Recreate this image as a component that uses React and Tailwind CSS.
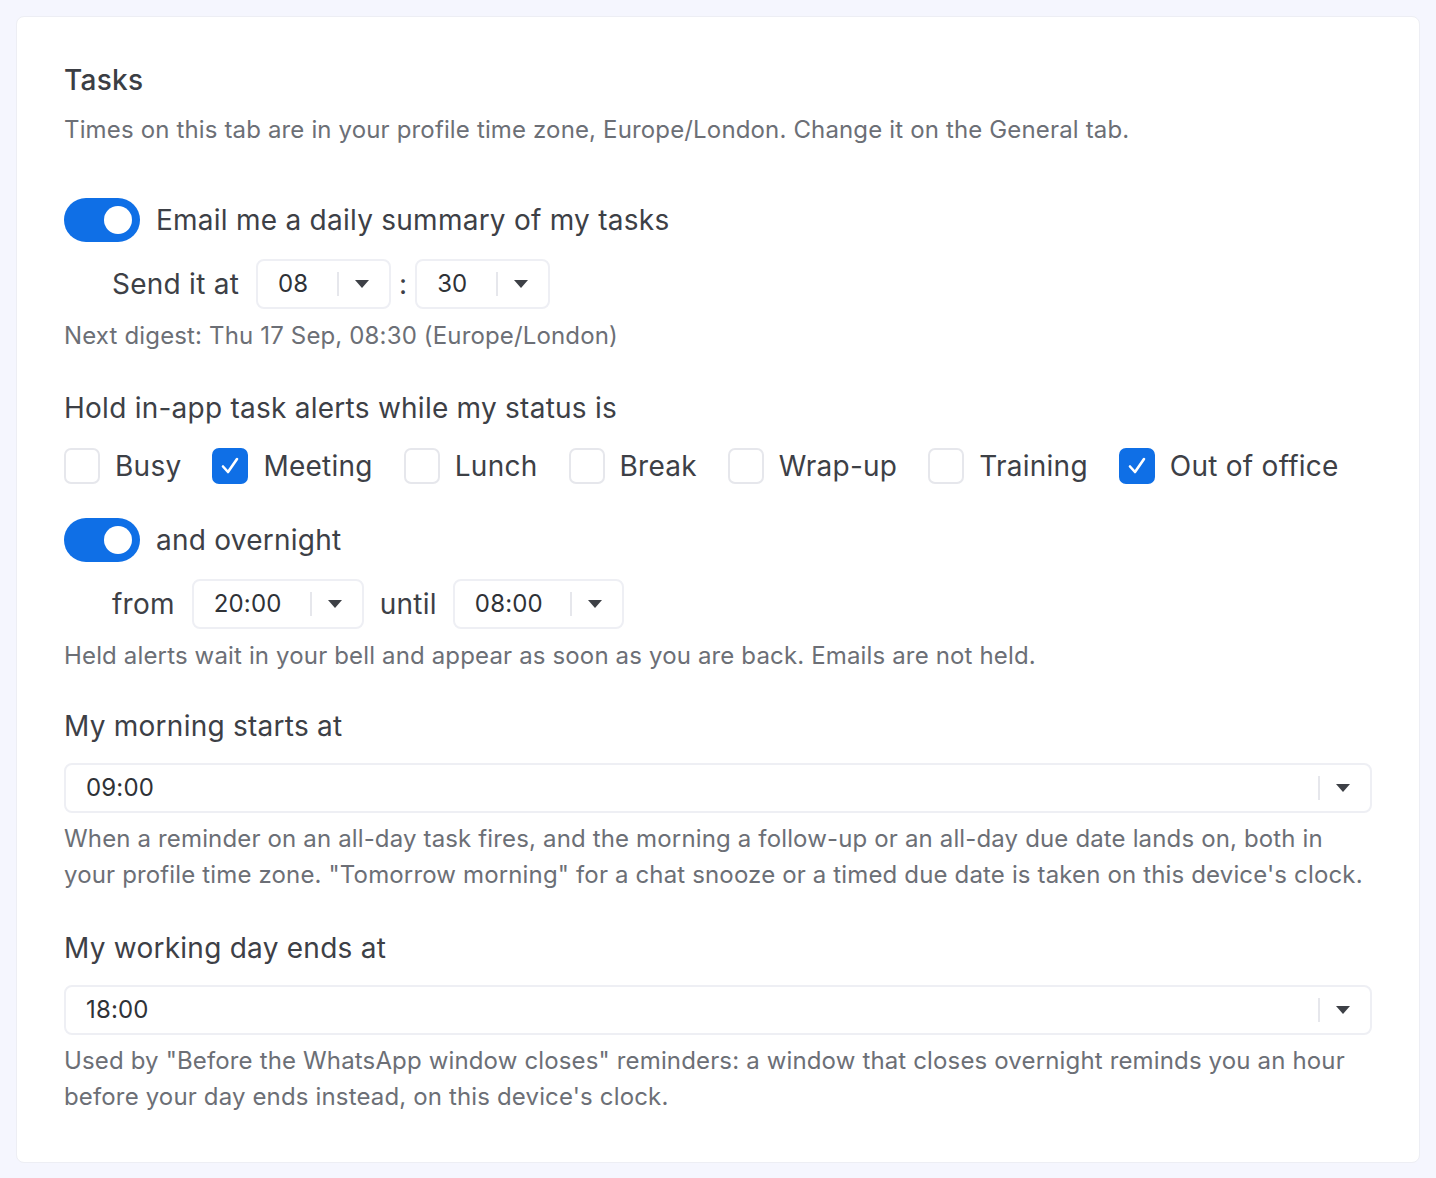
import React, { useState } from 'react';

const font = { fontFamily: 'Inter, "Noto Sans", sans-serif' };

const Caret = () => (
  <svg width="14" height="8" viewBox="0 0 14 8" className="shrink-0">
    <path d="M0 0 L14 0 L7 8 Z" fill="#3d4046" />
  </svg>
);

const Toggle = ({ on, onChange }) => (
  <button
    type="button"
    onClick={() => onChange(!on)}
    className={`relative h-[44px] w-[76px] shrink-0 rounded-full ${on ? 'bg-[#0f6fe6]' : 'bg-[#d5d7de]'}`}
  >
    <span
      className={`absolute top-[8px] h-[28px] w-[28px] rounded-full bg-white ${on ? 'left-[40px]' : 'left-[8px]'}`}
    />
  </button>
);

const Select = ({ value, className = '' }) => (
  <div className={`flex h-[50px] items-center rounded-[8px] border-2 border-[#eeeff4] bg-white pl-[20px] pr-[20px] ${className}`}>
    <span className="flex-1 text-[24px] tracking-[0.15px] text-[#2f3237]">{value}</span>
    <span className="mr-[16px] h-[24px] w-[2px] bg-[#e6e7ec]" />
    <Caret />
  </div>
);

const Checkbox = ({ label, checked, onChange }) => (
  <label className="flex cursor-pointer items-center gap-[15px]" onClick={onChange}>
    <span
      className={`flex h-[36px] w-[36px] items-center justify-center rounded-[7px] border-2 ${
        checked ? 'border-[#0f6fe6] bg-[#0f6fe6]' : 'border-[#e6e7ec] bg-white'
      }`}
    >
      {checked && (
        <svg width="24" height="24" viewBox="0 0 24 24">
          <path d="M5 12.5 L10 18 L19 5" fill="none" stroke="white" strokeWidth="2.6" strokeLinecap="round" strokeLinejoin="round" />
        </svg>
      )}
    </span>
    <span className="text-[28px] tracking-[0.25px] text-[#3d4046]">{label}</span>
  </label>
);

const App = () => {
  const [digest, setDigest] = useState(true);
  const [overnight, setOvernight] = useState(true);
  const [statuses, setStatuses] = useState({
    Busy: false,
    Meeting: true,
    Lunch: false,
    Break: false,
    'Wrap-up': false,
    Training: false,
    'Out of office': true
  });

  const toggleStatus = (s) => setStatuses({ ...statuses, [s]: !statuses[s] });

  return (
    <div className="min-h-[1178px] bg-[#f5f6fe] p-[16px]" style={font}>
      <div className="rounded-[8px] border border-[#edeef4] bg-white px-[47px] pb-[47px] pt-[45px] leading-[36px]">
        <h2 className="text-[28px] font-medium tracking-[0.3px] text-[#3b3e44]">Tasks</h2>
        <p className="mt-[14px] text-[24px] tracking-[0.15px] text-[#6c6f76]">
          Times on this tab are in your profile time zone, Europe/London. Change it on the General tab.
        </p>

        <div className="mt-[50px] flex items-center gap-[16px]">
          <Toggle on={digest} onChange={setDigest} />
          <span className="text-[28px] tracking-[0.25px] text-[#3d4046]">Email me a daily summary of my tasks</span>
        </div>
        <div className="mt-[17px] flex items-center pl-[48px]">
          <span className="mr-[17px] text-[28px] tracking-[0.25px] text-[#3d4046]">Send it at</span>
          <Select value="08" className="w-[135px]" />
          <span className="mx-[8px] text-[28px] text-[#3d4046]">:</span>
          <Select value="30" className="w-[135px]" />
        </div>
        <p className="mt-[9px] text-[24px] tracking-[0.15px] text-[#6c6f76]">Next digest: Thu 17 Sep, 08:30 (Europe/London)</p>

        <h3 className="mt-[36px] text-[28px] tracking-[0.25px] text-[#3d4046]">Hold in-app task alerts while my status is</h3>
        <div className="mt-[22px] flex items-center gap-[31px]">
          {Object.keys(statuses).map((s) => (
            <Checkbox key={s} label={s} checked={statuses[s]} onChange={() => toggleStatus(s)} />
          ))}
        </div>

        <div className="mt-[34px] flex items-center gap-[16px]">
          <Toggle on={overnight} onChange={setOvernight} />
          <span className="text-[28px] tracking-[0.25px] text-[#3d4046]">and overnight</span>
        </div>
        <div className="mt-[17px] flex items-center pl-[48px]">
          <span className="mr-[17px] text-[28px] tracking-[0.25px] text-[#3d4046]">from</span>
          <Select value="20:00" className="w-[172px]" />
          <span className="mx-[16px] text-[28px] tracking-[0.25px] text-[#3d4046]">until</span>
          <Select value="08:00" className="w-[171px]" />
        </div>
        <p className="mt-[9px] text-[24px] tracking-[0.15px] text-[#6c6f76]">
          Held alerts wait in your bell and appear as soon as you are back. Emails are not held.
        </p>

        <h3 className="mt-[34px] text-[28px] tracking-[0.25px] text-[#3d4046]">My morning starts at</h3>
        <Select value="09:00" className="mt-[19px] w-full" />
        <p className="mt-[8px] text-[24px] tracking-[0.15px] text-[#6c6f76]">
          When a reminder on an all-day task fires, and the morning a follow-up or an all-day due date lands on, both in
          your profile time zone. "Tomorrow morning" for a chat snooze or a timed due date is taken on this device's clock.
        </p>

        <h3 className="mt-[37px] text-[28px] tracking-[0.25px] text-[#3d4046]">My working day ends at</h3>
        <Select value="18:00" className="mt-[19px] w-full" />
        <p className="mt-[8px] text-[24px] tracking-[0.15px] text-[#6c6f76]">
          Used by "Before the WhatsApp window closes" reminders: a window that closes overnight reminds you an hour
          before your day ends instead, on this device's clock.
        </p>
      </div>
    </div>
  );
};

export default App;
